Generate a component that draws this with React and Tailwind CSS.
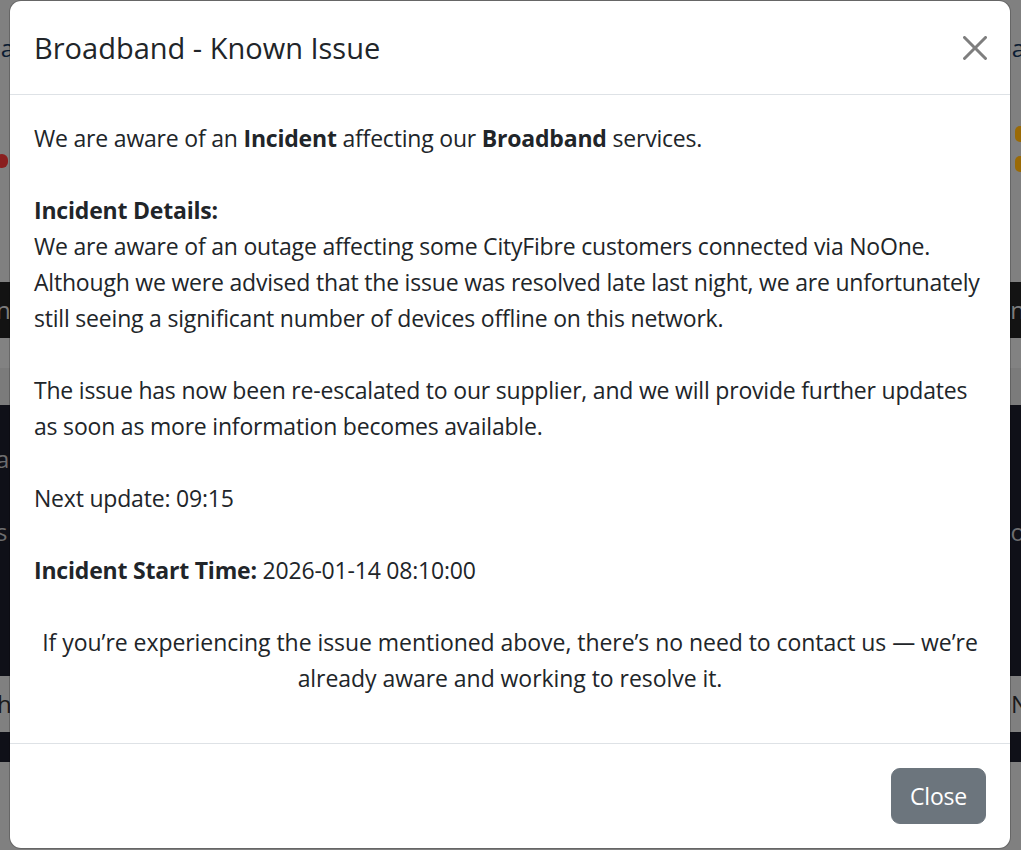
import React from 'react';

function CloseIcon() {
  return (
    <svg viewBox="0 0 16 16" className="h-6 w-6" fill="#000">
      <path d="M.293.293a1 1 0 0 1 1.414 0L8 6.586 14.293.293a1 1 0 1 1 1.414 1.414L9.414 8l6.293 6.293a1 1 0 0 1-1.414 1.414L8 9.414l-6.293 6.293a1 1 0 0 1-1.414-1.414L6.586 8 .293 1.707a1 1 0 0 1 0-1.414" />
    </svg>
  );
}

function Backdrop() {
  // the page behind the modal, already dimmed by the 50% backdrop
  return (
    <div className="flex flex-col text-[24px] leading-[36px]">
      <div className="h-[282px] bg-[#808080]">
        <div className="flex justify-between pt-[30px] text-[#0b1c33]">
          <span className="-ml-[14px]">pa</span>
          <span className="-mr-[4px]">a</span>
        </div>
        <div className="mt-[60px] flex justify-between">
          <span className="-ml-[4px] mt-[28px] h-[14px] w-[12px] rounded-full bg-[#8a1f1f]" />
          <span className="flex flex-col gap-[14px] -mr-[4px]">
            <span className="h-[16px] w-[10px] rounded-full bg-[#9a6a06]" />
            <span className="h-[16px] w-[10px] rounded-full bg-[#9a6a06]" />
          </span>
        </div>
      </div>
      <div className="flex h-[56px] items-center justify-between bg-[#131313] text-[#7c7c7c]">
        <span className="-ml-[4px]">n</span>
        <span className="-mr-[4px]">n</span>
      </div>
      <div className="h-[30px] bg-[#828282]" />
      <div className="h-[37px] bg-[#7b7b7b]" />
      <div className="flex h-[271px] flex-col justify-between bg-[#0f1018] py-[36px] text-[#6d6d6f]">
        <span className="-ml-[4px]">a</span>
        <div className="flex justify-between pb-[90px]">
          <span className="-ml-[4px]">s</span>
          <span className="-mr-[4px]">o</span>
        </div>
      </div>
      <div className="flex h-[56px] items-center justify-between bg-[#808080] text-[#1a1a1a]">
        <span className="-ml-[3px]">h</span>
        <span className="-mr-[8px]">N</span>
      </div>
      <div className="h-[30px] bg-[#0f1018]" />
      <div className="flex-1 bg-[#808080]" />
    </div>
  );
}

export default function App() {
  return (
    <div
      className="relative h-[850px] w-[1021px] overflow-hidden bg-[#808080]"
      style={{ fontFamily: '"Open Sans", "Noto Sans", sans-serif' }}
    >
      <div className="absolute inset-0">
        <Backdrop />
      </div>

      <div className="absolute left-[9px] top-0 w-[1002px] rounded-[12px] border border-black/20 bg-white bg-clip-padding text-[#212529]">
        <div className="flex items-center justify-between border-b border-[#dee2e6] p-6">
          <h5 className="text-[29px] leading-[45px] font-medium">Broadband - Known Issue</h5>
          <button className="-mr-px opacity-50">
            <CloseIcon />
          </button>
        </div>

        <div className="whitespace-nowrap px-6 pt-[25px] pb-[23px] text-[23px] leading-[36px] tracking-[-0.2px]">
          <p>
            We are aware of an <b className="font-bold">Incident</b> affecting our{' '}
            <b className="font-bold">Broadband</b> services.
            <br />
            <br />
            <b className="font-bold">Incident Details:</b>
            <br />
            We are aware of an outage affecting some CityFibre customers connected via NoOne.
            <br />
            Although we were advised that the issue was resolved late last night, we are unfortunately
            <br />
            still seeing a significant number of devices offline on this network.
            <br />
            <br />
            The issue has now been re-escalated to our supplier, and we will provide further updates
            <br />
            as soon as more information becomes available.
            <br />
            <br />
            Next update: 09:15
            <br />
            <br />
            <b className="font-bold">Incident Start Time:</b> 2026-01-14 08:10:00
          </p>
          <p className="mt-[36px] mb-6 text-center tracking-[-0.05px]">
            If you’re experiencing the issue mentioned above, there’s no need to contact us — we’re
            <br />
            already aware and working to resolve it.
          </p>
        </div>

        <div className="flex justify-end border-t border-[#dee2e6] p-[18px]">
          <button className="m-[6px] rounded-[9px] border border-[#6c757d] bg-[#6c757d] px-[18px] py-[9px] text-[23px] leading-[36px] tracking-[-0.2px] text-white">
            Close
          </button>
        </div>
      </div>
    </div>
  );
}
